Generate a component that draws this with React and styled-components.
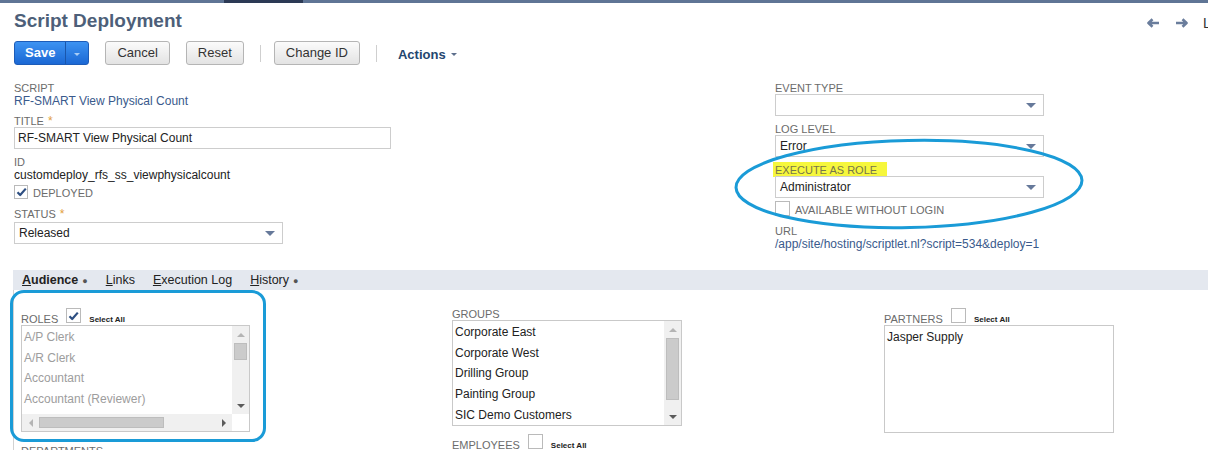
import React from 'react'
import styled, { createGlobalStyle } from 'styled-components'

const GlobalStyle = createGlobalStyle`
  html, body {
    margin: 0;
    padding: 0;
    background: #fff;
    overflow: hidden;
  }
  body {
    font-family: "Liberation Sans", Arial, sans-serif;
    color: #222;
  }
`

const Page = styled.div`
  position: relative;
  width: 1208px;
  height: 450px;
  overflow: hidden;
`

const TopBar = styled.div`
  height: 3px;
  background: #5f7595;
  display: flex;
`
const TopBarActive = styled.div`
  margin-left: 224px;
  width: 79px;
  background: #2c3a55;
`

const Header = styled.div`
  display: flex;
  align-items: center;
  height: 24px;
  margin-top: 6px;
  padding-left: 14px;
`
const Title = styled.h1`
  flex: 1;
  margin: 0;
  font-size: 19px;
  line-height: 24px;
  font-weight: bold;
  color: #4d5f79;
`
const Nav = styled.div`
  width: 61px;
  margin-top: 4px;
  display: flex;
  align-items: center;
  gap: 15px;
  overflow: hidden;
  white-space: nowrap;
  font-size: 14px;
  line-height: 16px;
  color: #333;

  & > * {
    flex-shrink: 0;
  }
`

const ButtonBar = styled.div`
  display: flex;
  align-items: center;
  gap: 16px;
  height: 24px;
  margin-top: 8px;
  padding-left: 14px;
`
const SplitButton = styled.div`
  display: flex;
  height: 24px;
  box-sizing: border-box;
  border: 1px solid #1d5cb8;
  border-radius: 3px;
  background: linear-gradient(#3d93f2, #1b68d4);
  color: #fff;
`
const SplitMain = styled.span`
  padding: 0 10px;
  font-size: 13px;
  font-weight: bold;
  line-height: 22px;
  border-right: 1px solid #1a56ab;
`
const SplitArrow = styled.span`
  width: 22px;
  display: flex;
  align-items: center;
  justify-content: center;
  padding-top: 2px;
  box-sizing: border-box;
`
const Button = styled.span`
  height: 24px;
  box-sizing: border-box;
  padding: 0 11px;
  border: 1px solid #b5b5b5;
  border-radius: 3px;
  background: linear-gradient(#fbfbfb, #e3e3e3);
  font-size: 13px;
  line-height: 22px;
  color: #333;
`
const Divider = styled.span`
  width: 1px;
  height: 17px;
  background: #cfcfcf;
  margin-right: ${p => p.$tight ? '-3px' : '0'};
`
const ActionsMenu = styled.span`
  display: flex;
  align-items: center;
  gap: 5px;
  margin-left: 5px;
  padding-top: 3px;
  font-size: 13px;
  font-weight: bold;
  color: #24466f;
`
const Caret = styled.span`
  width: 0;
  height: 0;
  border-left: ${p => p.$size}px solid transparent;
  border-right: ${p => p.$size}px solid transparent;
  border-top: ${p => p.$size}px solid ${p => p.$color};
`

const FieldGrid = styled.div`
  display: grid;
  grid-template-columns: 761px 270px;
  margin-top: 17px;
  padding-left: 14px;
`
const Column = styled.div`
  display: flex;
  flex-direction: column;
  align-items: flex-start;
`
const Field = styled.div`
  display: flex;
  flex-direction: column;
  align-items: flex-start;
  margin-bottom: 7px;
`
const Label = styled.div`
  font-size: 11px;
  line-height: 12px;
  color: #6b6b6b;
  text-transform: uppercase;
  white-space: nowrap;
`
const Mark = styled.span`
  background: #f6f73c;
  padding: 2px 10px 1px 2px;
  margin-left: -2px;
  color: #76764a;
`
const Req = styled.span`
  margin-left: 4px;
  font-size: 12px;
  color: #e2a03c;
`
const Value = styled.div`
  font-size: 12px;
  line-height: 14px;
  color: ${p => p.$link ? '#3a5a8c' : '#222'};
  white-space: nowrap;
`
const Control = styled.div`
  width: ${p => p.$w}px;
  height: 22px;
  margin-top: ${p => p.$mt || 0}px;
  box-sizing: border-box;
  border: 1px solid #cdcdcd;
  background: #fff;
  display: flex;
  align-items: center;
  justify-content: space-between;
  padding: 0 7px 0 ${p => p.$pl || 4}px;
  font-size: 12px;
  color: #222;
`
const CheckRow = styled.div`
  display: flex;
  align-items: flex-end;
  gap: 5px;
  margin: 3px 0 2px;
`
const CheckLabel = styled.span`
  font-size: 11px;
  line-height: 11px;
  color: #6b6b6b;
`
const Box = styled.span`
  width: ${p => p.$size}px;
  height: ${p => p.$size}px;
  margin-bottom: ${p => p.$mb || 0}px;
  box-sizing: border-box;
  border: 1px solid #bababa;
  background: #fff;
  display: inline-flex;
  align-items: center;
  justify-content: center;
  flex-shrink: 0;
`

const TabBar = styled.div`
  display: flex;
  align-items: center;
  gap: 18px;
  height: 20px;
  margin: 12px 0 0 13px;
  padding-left: 9px;
  background: #e4e8ef;
  font-size: 12.5px;
  color: #222;
`
const Tab = styled.span`
  font-weight: ${p => p.$active ? 'bold' : 'normal'};
  white-space: nowrap;
`
const Key = styled.u`
  text-decoration: underline;
`
const Dot = styled.span`
  margin-left: 4px;
  font-size: 9px;
  font-weight: normal;
  color: #555;
`

const Pane = styled.div`
  display: grid;
  grid-template-columns: 229px 230px 231px;
  column-gap: 202px;
  margin-left: 13px;
  padding: 18px 0 0 7px;
  border-left: 1px solid #d2d2d2;
  height: 200px;
`
const ListHeader = styled.div`
  display: flex;
  align-items: flex-end;
  height: ${p => p.$tall ? 17 : 12}px;
`
const ListLabel = styled(Label)`
  margin-right: 8px;
`
const SelectAll = styled.span`
  margin-left: 8px;
  font-size: 8px;
  line-height: 10px;
  font-weight: bold;
  color: #222;
`
const ListBox = styled.div`
  width: ${p => p.$w}px;
  height: ${p => p.$h}px;
  margin-bottom: ${p => p.$mb}px;
  box-sizing: border-box;
  border: 1px solid #c9c9c9;
  display: grid;
  grid-template-columns: 1fr auto;
  grid-template-rows: 1fr auto;
  background: #fff;
`
const Items = styled.div`
  overflow: hidden;
  padding: 1px 0 0 2px;
`
const Item = styled.div`
  font-size: 12px;
  line-height: 20.7px;
  color: ${p => p.$muted ? '#9d9d9d' : '#222'};
  white-space: nowrap;
`
const VScroll = styled.div`
  width: 17px;
  display: flex;
  flex-direction: column;
  background: #f0f0f0;
`
const HScroll = styled.div`
  height: 17px;
  display: flex;
  background: #f0f0f0;
`
const ScrollButton = styled.span`
  width: 17px;
  height: 17px;
  flex-shrink: 0;
  display: flex;
  align-items: center;
  justify-content: center;
`
const Track = styled.div`
  flex: 1;
  display: flex;
  flex-direction: ${p => p.$horizontal ? 'row' : 'column'};
`
const Thumb = styled.span`
  box-sizing: border-box;
  background: #cbcbcb;
  border: 1px solid #bdbdbd;
  ${p => p.$horizontal
    ? `width: ${p.$len}px; margin: 3px 0;`
    : `height: ${p.$len}px; margin: 0 2px;`}
`
const Corner = styled.span`
  background: #fff;
`
const Tri = styled.span`
  width: 0;
  height: 0;
  ${p => p.$dir === 'up' && `border-left: 4px solid transparent; border-right: 4px solid transparent; border-bottom: 4px solid ${p.$color};`}
  ${p => p.$dir === 'down' && `border-left: 4px solid transparent; border-right: 4px solid transparent; border-top: 4px solid ${p.$color};`}
  ${p => p.$dir === 'left' && `border-top: 4px solid transparent; border-bottom: 4px solid transparent; border-right: 4px solid ${p.$color};`}
  ${p => p.$dir === 'right' && `border-top: 4px solid transparent; border-bottom: 4px solid transparent; border-left: 4px solid ${p.$color};`}
`

const RoundBox = styled.div`
  position: absolute;
  left: 10px;
  top: 290px;
  width: 256px;
  height: 152px;
  box-sizing: border-box;
  border: 3px solid #1a9bd7;
  border-radius: 14px;
  pointer-events: none;
`
const EllipseMark = styled.svg`
  position: absolute;
  left: 733px;
  top: 137px;
  pointer-events: none;
`

const Check = ({ size = 14, checked, mb }) => (
  <Box $size={size} $mb={mb}>
    {checked && (
      <svg width="11" height="10" viewBox="0 0 11 10">
        <path d="M1.5 5.2 L4.2 8 L9.8 1.6" fill="none" stroke="#2e4f82" strokeWidth="2.2" strokeLinejoin="round" />
      </svg>
    )}
  </Box>
)

const Arrow = ({ dir }) => (
  <svg width="13" height="10" viewBox="0 0 13 10">
    <path
      d={dir === 'left' ? 'M5.5 1.2 L1.5 5 L5.5 8.8 M1.8 5 H12' : 'M7.5 1.2 L11.5 5 L7.5 8.8 M11.2 5 H1'}
      fill="none"
      stroke="#6a7d9c"
      strokeWidth="2.6"
      strokeLinejoin="round"
    />
  </svg>
)

const Select = ({ w, children, mt }) => (
  <Control $w={w} $mt={mt}>
    <span>{children}</span>
    <Caret $size={5} $color="#66799a" />
  </Control>
)

const App = () => {
  return (
    <Page>
      <GlobalStyle />
      <TopBar><TopBarActive /></TopBar>

      <Header>
        <Title>Script Deployment</Title>
        <Nav>
          <Arrow dir="left" />
          <Arrow dir="right" />
          <span>List</span>
        </Nav>
      </Header>

      <ButtonBar>
        <SplitButton>
          <SplitMain>Save</SplitMain>
          <SplitArrow><Caret $size={3} $color="#a9cdf6" /></SplitArrow>
        </SplitButton>
        <Button>Cancel</Button>
        <Button>Reset</Button>
        <Divider $tight />
        <Button>Change ID</Button>
        <Divider />
        <ActionsMenu>Actions <Caret $size={3} $color="#5d6f8c" /></ActionsMenu>
      </ButtonBar>

      <FieldGrid>
        <Column>
          <Field>
            <Label>Script</Label>
            <Value $link>RF-SMART View Physical Count</Value>
          </Field>
          <Field>
            <Label>Title<Req>*</Req></Label>
            <Control $w={377} $pl={3}>RF-SMART View Physical Count</Control>
          </Field>
          <Field>
            <Label>ID</Label>
            <Value>customdeploy_rfs_ss_viewphysicalcount</Value>
            <CheckRow>
              <Check checked />
              <CheckLabel>DEPLOYED</CheckLabel>
            </CheckRow>
          </Field>
          <Field>
            <Label>Status<Req>*</Req></Label>
            <Select w={269} mt={2}>Released</Select>
          </Field>
        </Column>

        <Column>
          <Field>
            <Label>Event Type</Label>
            <Select w={269}></Select>
          </Field>
          <Field>
            <Label>Log Level</Label>
            <Select w={269}>Error</Select>
          </Field>
          <Field>
            <Label><Mark>Execute as Role</Mark></Label>
            <Select w={269}>Administrator</Select>
            <CheckRow>
              <Check size={15} />
              <CheckLabel>AVAILABLE WITHOUT LOGIN</CheckLabel>
            </CheckRow>
          </Field>
          <Field>
            <Label>URL</Label>
            <Value $link>/app/site/hosting/scriptlet.nl?script=534&amp;deploy=1</Value>
          </Field>
        </Column>
      </FieldGrid>

      <TabBar>
        <Tab $active><Key>A</Key>udience<Dot>●</Dot></Tab>
        <Tab><Key>L</Key>inks</Tab>
        <Tab><Key>E</Key>xecution Log</Tab>
        <Tab><Key>H</Key>istory<Dot>●</Dot></Tab>
      </TabBar>

      <Pane>
        <Column>
          <ListHeader $tall>
            <ListLabel>Roles</ListLabel>
            <Check size={15} checked mb={2} />
            <SelectAll>Select All</SelectAll>
          </ListHeader>
          <ListBox $w={229} $h={107} $mb={8}>
            <Items>
              <Item $muted>A/P Clerk</Item>
              <Item $muted>A/R Clerk</Item>
              <Item $muted>Accountant</Item>
              <Item $muted>Accountant (Reviewer)</Item>
            </Items>
            <VScroll>
              <ScrollButton><Tri $dir="up" $color="#b4b4b4" /></ScrollButton>
              <Track><Thumb $len={17} /></Track>
              <ScrollButton><Tri $dir="down" $color="#5b5b5b" /></ScrollButton>
            </VScroll>
            <HScroll>
              <ScrollButton><Tri $dir="left" $color="#b4b4b4" /></ScrollButton>
              <Track $horizontal><Thumb $horizontal $len={125} /></Track>
              <ScrollButton><Tri $dir="right" $color="#5b5b5b" /></ScrollButton>
            </HScroll>
            <Corner />
          </ListBox>
          <ListHeader $tall>
            <ListLabel>Departments</ListLabel>
          </ListHeader>
        </Column>

        <Column>
          <ListHeader>
            <ListLabel>Groups</ListLabel>
          </ListHeader>
          <ListBox $w={230} $h={106} $mb={8}>
            <Items>
              <Item>Corporate East</Item>
              <Item>Corporate West</Item>
              <Item>Drilling Group</Item>
              <Item>Painting Group</Item>
              <Item>SIC Demo Customers</Item>
            </Items>
            <VScroll>
              <ScrollButton><Tri $dir="up" $color="#b4b4b4" /></ScrollButton>
              <Track><Thumb $len={62} /></Track>
              <ScrollButton><Tri $dir="down" $color="#5b5b5b" /></ScrollButton>
            </VScroll>
          </ListBox>
          <ListHeader $tall>
            <ListLabel>Employees</ListLabel>
            <Check size={15} mb={2} />
            <SelectAll>Select All</SelectAll>
          </ListHeader>
        </Column>

        <Column>
          <ListHeader $tall>
            <ListLabel>Partners</ListLabel>
            <Check size={15} mb={2} />
            <SelectAll>Select All</SelectAll>
          </ListHeader>
          <ListBox $w={230} $h={108} $mb={8}>
            <Items>
              <Item>Jasper Supply</Item>
            </Items>
          </ListBox>
        </Column>
      </Pane>

      <RoundBox />
      <EllipseMark width="352" height="94" viewBox="0 0 352 94">
        <ellipse cx="176" cy="47" rx="173" ry="43.5" fill="none" stroke="#1a9bd7" strokeWidth="3" transform="rotate(-1.2 176 47)" />
      </EllipseMark>
    </Page>
  )
}

export default App
